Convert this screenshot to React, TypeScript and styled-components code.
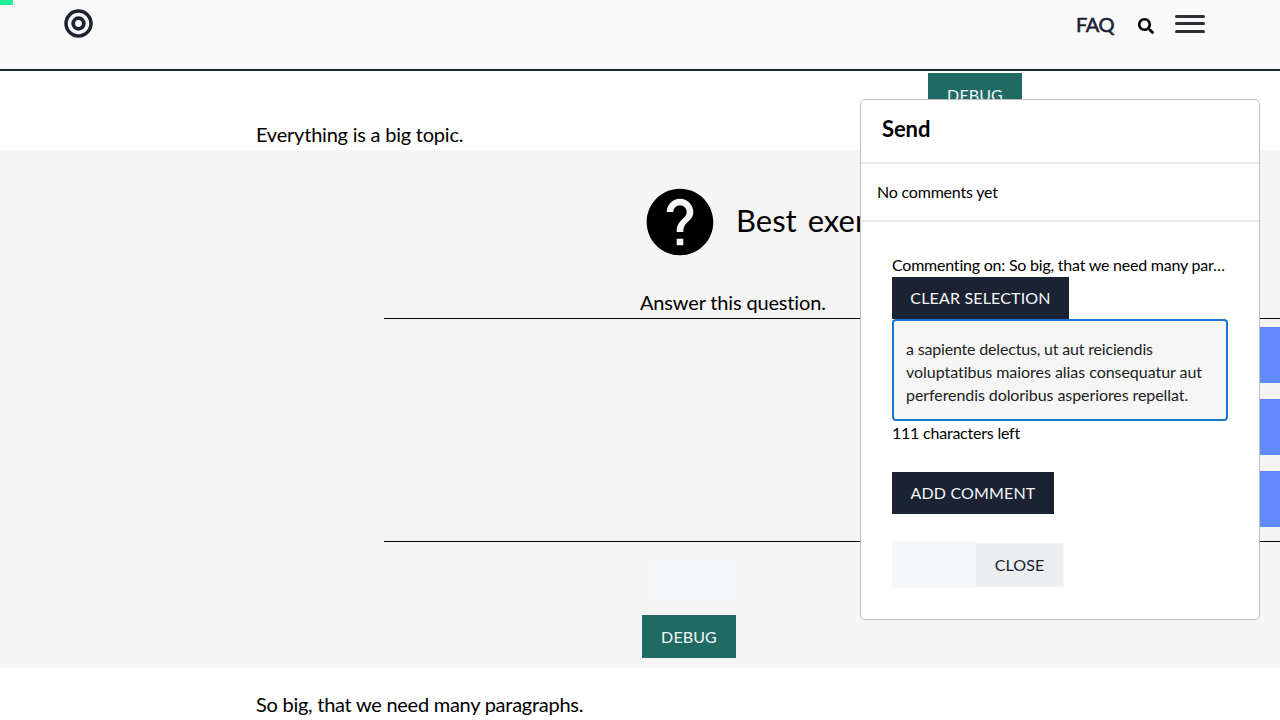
import React from "react";
import styled, { createGlobalStyle } from "styled-components";
import { MdHelp } from "react-icons/md";
import { FaSearch } from "react-icons/fa";

const GlobalStyle = createGlobalStyle`
  *, *::before, *::after { box-sizing: border-box; }
  body {
    margin: 0;
    overflow: hidden;
    background: #fff;
    color: #000;
    font-family: Lato, sans-serif;
    font-variant-ligatures: none;
  }
  p, h2, h3 { margin: 0; }
  button { border: 0; border-radius: 0; font-family: inherit; }
`;

const Page = styled.div`
  position: relative;
  width: 1280px;
  height: 720px;
  overflow: hidden;
`;

const Progress = styled.div`
  position: absolute;
  top: 0;
  left: 0;
  width: 13px;
  height: 5px;
  background: #21f09b;
`;

const Header = styled.header`
  display: flex;
  justify-content: space-between;
  align-items: flex-start;
  height: 71px;
  padding: 9px 75px 0 64px;
  background: #f9f9f9;
  border-bottom: 2px solid #1a2233;
`;

const Nav = styled.nav`
  display: flex;
  align-items: flex-start;
`;

const FaqLink = styled.a`
  width: 62px;
  padding-top: 3px;
  font-size: 20px;
  line-height: 24px;
  letter-spacing: -0.4px;
  color: #1a2233;
  -webkit-text-stroke: 0.6px #1a2233;
`;

const SearchIcon = styled(FaSearch)`
  width: 16px;
  height: 16px;
  margin: 9px 21px 0 0;
`;

const MenuButton = styled.div`
  display: grid;
  grid-template-rows: 3px 3px 3px;
  row-gap: 4px;
  width: 30px;
  padding-top: 6px;
`;

const MenuBar = styled.span`
  height: 3px;
  border-radius: 1.5px;
  background: #2f2e33;
  &:last-child { margin-top: 1px; }
`;

const Intro = styled.section`
  display: flex;
  align-items: flex-start;
  height: 79px;
  padding: 2px 0 0 256px;
`;

const Paragraph = styled.p<{ $top?: number; $width?: string; $tracking?: number }>`
  width: ${(p) => p.$width ?? "auto"};
  margin-top: ${(p) => p.$top ?? 0}px;
  font-size: 20px;
  line-height: 30px;
  letter-spacing: ${(p) => p.$tracking ?? -0.26}px;
`;

const DebugButton = styled.button`
  width: 94px;
  height: 43px;
  padding: 0;
  background: #1f6a63;
  color: #f4f6f8;
  font-size: 16px;
  line-height: 24px;
  letter-spacing: 0.12px;
`;

const Exercise = styled.section`
  display: flex;
  flex-direction: column;
  height: 518px;
  padding-top: 32px;
  background: #f5f5f5;
`;

const ExerciseHead = styled.div`
  display: flex;
  align-items: center;
  height: 80px;
  padding-left: 640px;
`;

const ExerciseTitle = styled.h2`
  padding: 0 0 5px 16px;
  font-weight: 400;
  font-size: 31px;
  line-height: 40px;
  letter-spacing: 0;
  word-spacing: 3px;
  white-space: nowrap;
`;

const Question = styled.div`
  height: 56px;
  padding: 25px 0 0 640px;
`;

const Choices = styled.div`
  display: flex;
  flex-direction: column;
  align-items: flex-end;
  gap: 16px;
  height: 224px;
  margin-left: 384px;
  padding-top: 8px;
  border-top: 1px solid #000;
  border-bottom: 1px solid #000;
`;

const Choice = styled.div`
  width: 40px;
  height: 56px;
  background: #6389ff;
`;

const ExerciseActions = styled.div`
  display: flex;
  flex-direction: column;
  align-items: flex-start;
  padding: 15px 0 0 642px;
`;

const Placeholder = styled.div<{ $width: number; $height: number }>`
  width: ${(p) => p.$width}px;
  height: ${(p) => p.$height}px;
  background: #f4f6f8;
`;

const SubmitSlot = styled.div`
  height: 58px;
`;

const Outro = styled.section`
  padding: 21px 0 0 256px;
`;

const Dialog = styled.aside`
  position: absolute;
  top: 99px;
  left: 860px;
  width: 400px;
  height: 521px;
  border: 1px solid #bfbfbf;
  border-radius: 5px;
  background: #fff;
`;

const DialogHeader = styled.div`
  height: 64px;
  padding: 14px 21px 0;
  border-bottom: 2px solid #e8e8e8;
`;

const DialogTitle = styled.h3`
  font-size: 22px;
  line-height: 30px;
  font-weight: 700;
  letter-spacing: -0.1px;
`;

const DialogStatus = styled.div`
  height: 58px;
  padding: 16px;
  border-bottom: 2px solid #e8e8e8;
  font-size: 16px;
  line-height: 24px;
  letter-spacing: -0.2px;
`;

const DialogBody = styled.div`
  display: flex;
  flex-direction: column;
  align-items: flex-start;
  padding: 31px 31px 0;
  font-size: 16px;
  line-height: 24px;
  letter-spacing: -0.22px;
`;

const Selection = styled.p`
  width: 336px;
  height: 24px;
  white-space: nowrap;
`;

const DarkButton = styled.button<{ $width: number }>`
  width: ${(p) => p.$width}px;
  height: 42px;
  padding: 0;
  background: #1a2233;
  color: #f4f6f8;
  font-size: 16px;
  line-height: 24px;
  letter-spacing: 0.16px;
`;

const CommentBox = styled.div`
  width: 336px;
  height: 102px;
  padding: 16px 12px;
  border: 2px solid #1976d2;
  border-radius: 4px;
  background: #f6f6f6;
  color: #212121;
  line-height: 23px;
`;

const CommentLine = styled.span<{ $tracking: number }>`
  display: block;
  white-space: nowrap;
  letter-spacing: ${(p) => p.$tracking}px;
`;

const Counter = styled.p`
  height: 51px;
`;

const DialogFooter = styled.div`
  display: flex;
  align-items: center;
  margin-top: 27px;
`;

const CloseButton = styled.button`
  width: 88px;
  height: 44px;
  padding: 0;
  border: 1px solid #f4f6f8;
  border-left: 0;
  background: #ebedee;
  color: #1a2233;
  font-size: 16px;
  line-height: 24px;
  letter-spacing: 0.12px;
`;

function Logo() {
  return (
    <svg width="29" height="29" viewBox="0 0 29 29" fill="none" stroke="#1a2233">
      <circle cx="14.5" cy="14.5" r="12.5" strokeWidth="3.5" />
      <circle cx="14.5" cy="14.5" r="5.3" strokeWidth="3.8" />
    </svg>
  );
}

export default function App() {
  return (
    <Page>
      <GlobalStyle />
      <Header>
        <Logo />
        <Nav>
          <FaqLink>FAQ</FaqLink>
          <SearchIcon />
          <MenuButton>
            <MenuBar />
            <MenuBar />
            <MenuBar />
          </MenuButton>
        </Nav>
      </Header>
      <Intro>
        <Paragraph $top={46} $width="672px" $tracking={-0.22}>Everything is a big topic.</Paragraph>
        <DebugButton>DEBUG</DebugButton>
      </Intro>
      <Exercise>
        <ExerciseHead>
          <MdHelp size={80} />
          <ExerciseTitle>Best exercise</ExerciseTitle>
        </ExerciseHead>
        <Question>
          <Paragraph $tracking={-0.16}>Answer this question.</Paragraph>
        </Question>
        <Choices>
          <Choice />
          <Choice />
          <Choice />
        </Choices>
        <ExerciseActions>
          <SubmitSlot>
            <Placeholder $width={100} $height={47} />
          </SubmitSlot>
          <DebugButton>DEBUG</DebugButton>
        </ExerciseActions>
      </Exercise>
      <Outro>
        <Paragraph>So big, that we need many paragraphs.</Paragraph>
      </Outro>
      <Dialog>
        <DialogHeader>
          <DialogTitle>Send</DialogTitle>
        </DialogHeader>
        <DialogStatus>No comments yet</DialogStatus>
        <DialogBody>
          <Selection>Commenting on: So big, that we need many par…</Selection>
          <DarkButton $width={177}>CLEAR SELECTION</DarkButton>
          <CommentBox>
            <CommentLine $tracking={-0.18}>a sapiente delectus, ut aut reiciendis</CommentLine>
            <CommentLine $tracking={-0.04}>voluptatibus maiores alias consequatur aut</CommentLine>
            <CommentLine $tracking={-0.08}>perferendis doloribus asperiores repellat.</CommentLine>
          </CommentBox>
          <Counter>111 characters left</Counter>
          <DarkButton $width={162}>ADD COMMENT</DarkButton>
          <DialogFooter>
            <Placeholder $width={84} $height={47} />
            <CloseButton>CLOSE</CloseButton>
          </DialogFooter>
        </DialogBody>
      </Dialog>
      <Progress />
    </Page>
  );
}
